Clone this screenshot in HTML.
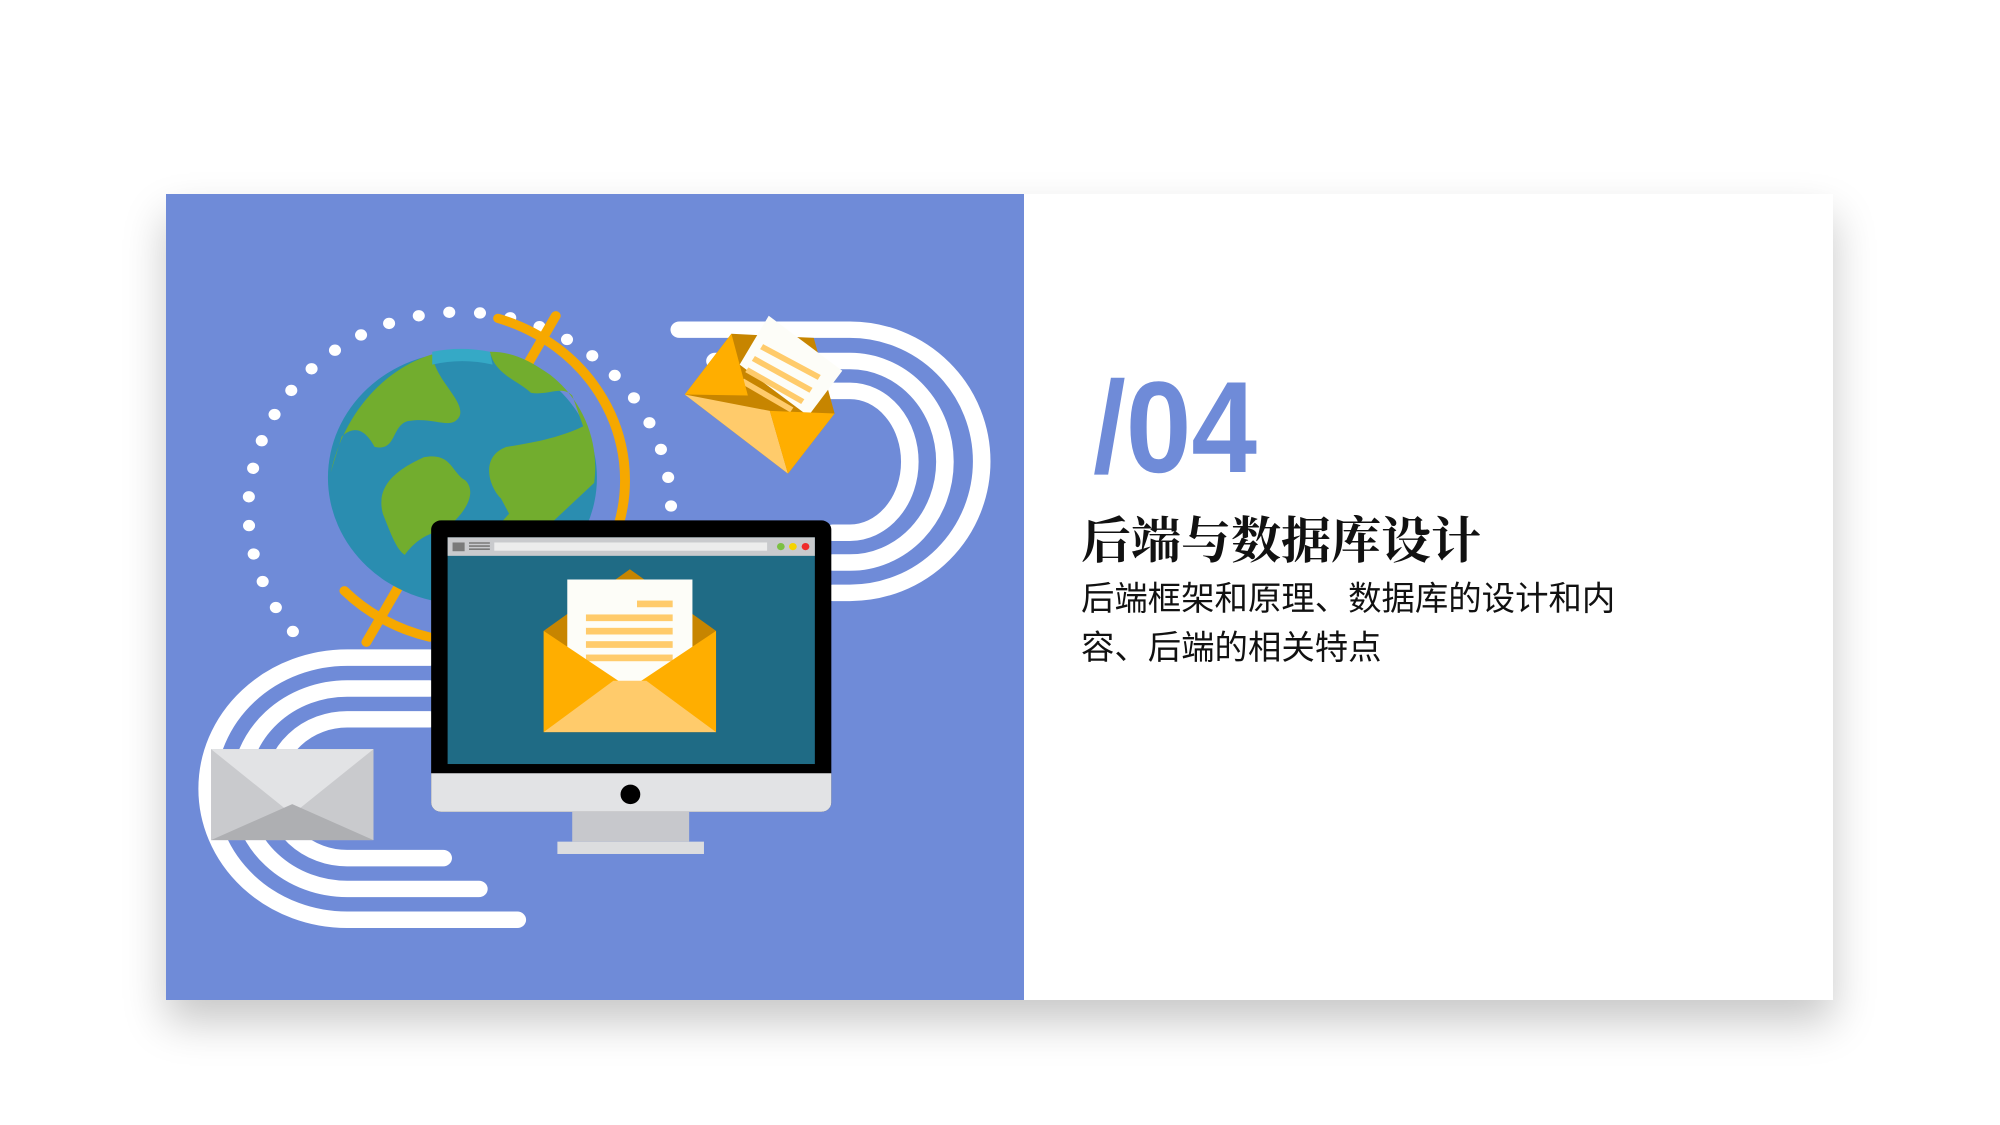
<!DOCTYPE html>
<html><head><meta charset="utf-8"><style>
html,body{margin:0;padding:0;background:#fff;width:2000px;height:1125px;overflow:hidden}
.card{position:absolute;left:166px;top:194px;width:1667px;height:806px;background:#fff;box-shadow:0 22px 40px rgba(0,0,0,0.22)}
.blue{position:absolute;left:166px;top:194px;width:858px;height:806px;background:#6f8bd8}
.t{position:absolute;font-family:"Liberation Serif","Noto Serif CJK SC",serif;font-weight:bold;font-size:50px;left:1081px;top:501px;color:#111;white-space:nowrap;letter-spacing:0px}
.s{position:absolute;font-family:"Liberation Sans","Noto Sans CJK SC",sans-serif;font-size:33.4px;left:1081px;top:575px;line-height:49px;color:#111;width:560px}
</style></head><body>
<div class="card"></div>
<div class="blue"></div>
<svg style="position:absolute;left:166px;top:195px" width="858" height="806" viewBox="0 0 1563 1568" preserveAspectRatio="none">
 <g fill="none" stroke="#fff" stroke-width="32" stroke-linecap="round">
  <path d="M935 262 H1246 A239 255 0 0 1 1246 774 H1215"/>
  <path d="M1000 323 H1246 A173 196 0 0 1 1246 715 H1215"/>
  <path d="M1060 381 H1246 A109 138 0 0 1 1246 657 H1215"/>
  <path d="M480 900 H330 A255 255 0 0 0 330 1410 H640"/>
  <path d="M480 960 H330 A195 195 0 0 0 330 1350 H570"/>
  <path d="M480 1020 H330 A135 135 0 0 0 330 1290 H505"/>
 </g>
 <path d="M920 605 A385 385 0 1 0 240 860" fill="none" stroke="#fff" stroke-width="22" stroke-linecap="round" stroke-dasharray="0 56"/>
 <g stroke="#f6a800" stroke-width="18" stroke-linecap="round" fill="none">
  <path d="M710 235 L365 870"/>
  <path d="M605 240 A330 330 0 0 1 825 640"/>
  <path d="M325 770 A330 330 0 0 0 480 860"/>
 </g>
 <circle cx="540" cy="550" r="245" fill="#2a8db0"/>
 <path d="M300 560 A245 245 0 0 0 780 560 A245 245 0 0 1 300 560Z" fill="#23809d"/>
 <path d="M485 310 C420 330 330 400 300 540 L320 470 C350 440 370 470 380 490 C420 500 410 450 440 440 C490 430 520 460 535 430 C545 400 490 360 485 310Z" fill="#72ad2e"/>
 <path d="M590 305 C600 350 640 360 665 385 C700 390 720 370 740 390 L760 450 C720 470 680 480 620 490 C570 510 590 570 610 590 L625 620 L600 650 L700 640 L780 560 C790 480 760 400 700 350 C660 320 630 305 590 305Z" fill="#72ad2e"/>
 <path d="M470 510 C430 530 380 560 395 620 C410 660 420 690 435 700 C470 650 500 660 520 640 C560 600 560 570 545 555 C520 540 520 500 470 510Z" fill="#72ad2e"/>
 <path d="M485 305 A245 245 0 0 1 590 305 L595 330 A230 230 0 0 0 485 330Z" fill="#35a9c6"/>
 <polygon points="945,388 1030,270 1180,278 1218,425 1133,542" fill="#c78500"/>
 <polygon points="1098,235 1232,342 1170,430 1045,330" fill="#fdfdf8"/>
 <g stroke="#ffcb6b" stroke-width="11"><line x1="1085" y1="295" x2="1190" y2="355"/><line x1="1070" y1="318" x2="1175" y2="380"/><line x1="1058" y1="340" x2="1160" y2="402"/><line x1="1050" y1="362" x2="1140" y2="418"/></g>
 <polygon points="945,388 1030,270 1060,390" fill="#ffae00"/>
 <polygon points="945,388 1100,420 1133,542" fill="#ffcb6b"/>
 <polygon points="1100,420 1218,425 1133,542" fill="#ffae00"/>
 <rect x="82" y="1078" width="296" height="177" fill="#c9cacd"/>
 <polygon points="82,1078 378,1078 230,1205" fill="#e2e3e5"/>
 <polygon points="82,1255 230,1185 378,1255" fill="#aeafb2"/>
 <rect x="713" y="1258" width="267" height="24" fill="#dcdddf"/>
 <rect x="740" y="1195" width="213" height="63" fill="#c7c8cc"/>
 <rect x="483" y="633" width="729" height="567" rx="18" fill="#000"/>
 <path d="M483 1125 H1212 V1182 A18 18 0 0 1 1194 1200 H501 A18 18 0 0 1 483 1182Z" fill="#e2e3e5"/>
 <ellipse cx="846" cy="1166" rx="18" ry="19" fill="#000"/>
 <rect x="513" y="666" width="669" height="441" fill="#1f6b85"/>
 <rect x="513" y="666" width="669" height="36" fill="#c9cacd"/>
 <rect x="522" y="676" width="22" height="17" fill="#7a7a7a"/>
 <g stroke="#7a7a7a" stroke-width="3"><line x1="552" y1="677" x2="590" y2="677"/><line x1="552" y1="683" x2="590" y2="683"/><line x1="552" y1="689" x2="590" y2="689"/></g>
 <rect x="598" y="676" width="497" height="16" fill="#ececec"/>
 <circle cx="1120" cy="684" r="7" fill="#7bc043"/><circle cx="1142" cy="684" r="7" fill="#f5d300"/><circle cx="1165" cy="684" r="7" fill="#ef2b2b"/>
 <polygon points="688,848 845,728 1002,848 1002,1045 688,1045" fill="#c78500"/>
 <rect x="731" y="748" width="228" height="200" fill="#fdfdf8"/>
 <g fill="#ffcb6b"><rect x="858" y="789" width="65" height="13"/><rect x="765" y="816" width="158" height="13"/><rect x="765" y="842" width="158" height="13"/><rect x="765" y="868" width="158" height="13"/><rect x="765" y="894" width="158" height="13"/></g>
 <polygon points="688,848 845,960 688,1045" fill="#ffae00"/>
 <polygon points="1002,848 845,960 1002,1045" fill="#ffae00"/>
 <polygon points="688,1045 815,945 875,945 1002,1045" fill="#ffcb6b"/>
</svg>
<svg style="position:absolute;left:1080px;top:360px" width="220" height="130">
 <text x="13" y="112" font-family="Liberation Sans Narrow, Liberation Sans, sans-serif" font-weight="bold" font-size="130" fill="#6f8bd8" textLength="164" lengthAdjust="spacingAndGlyphs">/04</text>
</svg>
<div class="t">后端与数据库设计</div>
<div class="s">后端框架和原理、数据库的设计和内容、后端的相关特点</div>
</body></html>
